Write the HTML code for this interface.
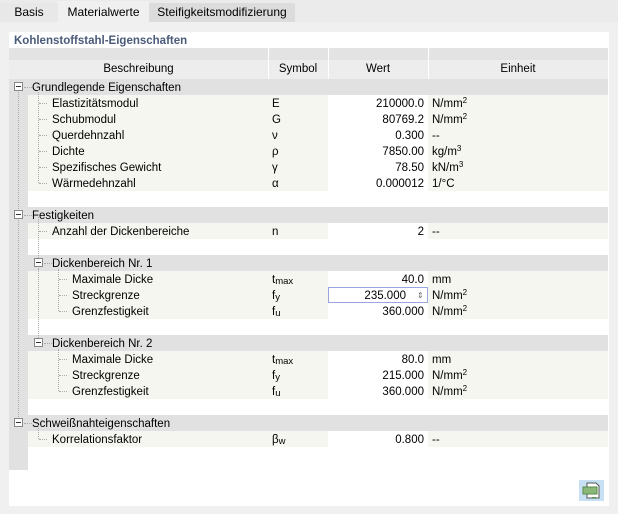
<!DOCTYPE html>
<html><head><meta charset="utf-8"><style>
*{margin:0;padding:0;box-sizing:border-box}
body{width:618px;height:514px;background:#ebebeb;font-family:"Liberation Sans",sans-serif;font-size:11.5px;color:#000;position:relative;overflow:hidden}
.a{position:absolute}
.tab{position:absolute;top:3px;height:19px;line-height:19px;text-align:center;font-size:12px}
.r{position:absolute;left:28px;width:580px;height:16px;line-height:18px}
.g{background:#e1e1e1}
.c{background:#f6f6f0}
.v{position:absolute;left:300px;width:100px;height:16px;background:#fff;text-align:right;padding-right:4px}
.s{position:absolute;left:244px}
.u{position:absolute;left:404px}
.t{position:absolute;white-space:nowrap}
.box{position:absolute;width:9px;height:9px;border:1px solid #888;background:#fff}
.box:after{content:"";position:absolute;left:1px;top:3px;width:5px;height:1px;background:#333}
.dh{position:absolute;height:0;border-top:1px dotted #aaa;width:8px}
.dv{position:absolute;width:0;border-left:1px dotted #aaa}
sup{font-size:8px;vertical-align:4px;line-height:0}
sub{font-size:9.5px;vertical-align:-1px;line-height:0}
</style></head><body>
<div class="tab" style="left:0;width:58px;background:#e8e8e8">Basis</div>
<div class="tab" style="left:58px;width:91px;top:1px;height:22px;line-height:23px;background:#f0f0f0">Materialwerte</div>
<div class="tab" style="left:149px;width:146px;background:#dcdcdc">Steifigkeitsmodifizierung</div>
<div class="a" style="left:0;top:22px;width:618px;height:492px;background:#f0f0f0"></div>
<div class="a" style="left:9px;top:32px;width:600px;height:474px;background:#fff"></div>
<div class="a" style="left:14px;top:33px;color:#4a5a7a;font-weight:bold;font-size:11.5px;line-height:16px">Kohlenstoffstahl-Eigenschaften</div>
<div class="a" style="left:9px;top:48px;width:599px;height:12px;background:#e3e3e3"></div>
<div class="a" style="left:9px;top:60px;width:599px;height:19px;background:#ededed;line-height:18px">
<span class="t" style="left:0;width:259px;text-align:center">Beschreibung</span>
<span class="t" style="left:259px;width:60px;text-align:center">Symbol</span>
<span class="t" style="left:319px;width:100px;text-align:center">Wert</span>
<span class="t" style="left:419px;width:180px;text-align:center">Einheit</span></div>
<div class="a" style="left:268px;top:48px;width:1px;height:31px;background:#fff"></div>
<div class="a" style="left:328px;top:48px;width:1px;height:31px;background:#fff"></div>
<div class="a" style="left:428px;top:48px;width:1px;height:31px;background:#fff"></div>
<div class="a" style="left:9px;top:79px;width:19px;height:391px;background:#e1e1e1"></div>

<!-- rows -->
<div class="r g" style="top:79px;left:9px;width:599px"><span class="t" style="left:23px">Grundlegende Eigenschaften</span></div>
<div class="r c" style="top:95px"><span class="t" style="left:24px">Elastizitätsmodul</span><span class="s">E</span><div class="v">210000.0</div><span class="u">N/mm<sup>2</sup></span></div>
<div class="r c" style="top:111px"><span class="t" style="left:24px">Schubmodul</span><span class="s">G</span><div class="v">80769.2</div><span class="u">N/mm<sup>2</sup></span></div>
<div class="r c" style="top:127px"><span class="t" style="left:24px">Querdehnzahl</span><span class="s">ν</span><div class="v">0.300</div><span class="u">--</span></div>
<div class="r c" style="top:143px"><span class="t" style="left:24px">Dichte</span><span class="s">ρ</span><div class="v">7850.00</div><span class="u">kg/m<sup>3</sup></span></div>
<div class="r c" style="top:159px"><span class="t" style="left:24px">Spezifisches Gewicht</span><span class="s">γ</span><div class="v">78.50</div><span class="u">kN/m<sup>3</sup></span></div>
<div class="r c" style="top:175px"><span class="t" style="left:24px">Wärmedehnzahl</span><span class="s">α</span><div class="v">0.000012</div><span class="u">1/°C</span></div>

<div class="r g" style="top:207px;left:9px;width:599px"><span class="t" style="left:23px">Festigkeiten</span></div>
<div class="r c" style="top:223px"><span class="t" style="left:24px">Anzahl der Dickenbereiche</span><span class="s">n</span><div class="v">2</div><span class="u">--</span></div>

<div class="r g" style="top:255px"><span class="t" style="left:24px">Dickenbereich Nr. 1</span></div>
<div class="r c" style="top:271px"><span class="t" style="left:44px">Maximale Dicke</span><span class="s">t<sub>max</sub></span><div class="v">40.0</div><span class="u">mm</span></div>
<div class="r c" style="top:287px"><span class="t" style="left:44px">Streckgrenze</span><span class="s">f<sub>y</sub></span><div class="v" style="border:1px solid #99a6e0;padding-right:21px;line-height:16px">235.000</div><span class="t" style="left:389px;font-size:8px;color:#666">⇕</span><span class="u">N/mm<sup>2</sup></span></div>
<div class="r c" style="top:303px"><span class="t" style="left:44px">Grenzfestigkeit</span><span class="s">f<sub>u</sub></span><div class="v">360.000</div><span class="u">N/mm<sup>2</sup></span></div>

<div class="r g" style="top:335px"><span class="t" style="left:24px">Dickenbereich Nr. 2</span></div>
<div class="r c" style="top:351px"><span class="t" style="left:44px">Maximale Dicke</span><span class="s">t<sub>max</sub></span><div class="v">80.0</div><span class="u">mm</span></div>
<div class="r c" style="top:367px"><span class="t" style="left:44px">Streckgrenze</span><span class="s">f<sub>y</sub></span><div class="v">215.000</div><span class="u">N/mm<sup>2</sup></span></div>
<div class="r c" style="top:383px"><span class="t" style="left:44px">Grenzfestigkeit</span><span class="s">f<sub>u</sub></span><div class="v">360.000</div><span class="u">N/mm<sup>2</sup></span></div>

<div class="r g" style="top:415px;left:9px;width:599px"><span class="t" style="left:23px">Schweißnahteigenschaften</span></div>
<div class="r c" style="top:431px"><span class="t" style="left:24px">Korrelationsfaktor</span><span class="s">β<sub>w</sub></span><div class="v">0.800</div><span class="u">--</span></div>

<!-- tree -->
<div class="box" style="left:14px;top:82px"></div>
<div class="box" style="left:14px;top:210px"></div>
<div class="box" style="left:14px;top:418px"></div>
<div class="box" style="left:34px;top:258px"></div>
<div class="box" style="left:34px;top:338px"></div>
<div class="dh" style="left:24px;top:87px"></div><div class="dh" style="left:24px;top:215px"></div><div class="dh" style="left:24px;top:423px"></div>
<div class="dv" style="left:18px;top:92px;height:117px"></div>
<div class="dv" style="left:18px;top:220px;height:197px"></div>
<div class="dv" style="left:38px;top:89px;height:94px"></div>
<div class="dh" style="left:39px;top:103px"></div><div class="dh" style="left:39px;top:119px"></div><div class="dh" style="left:39px;top:135px"></div><div class="dh" style="left:39px;top:151px"></div><div class="dh" style="left:39px;top:167px"></div><div class="dh" style="left:39px;top:183px"></div>
<div class="dv" style="left:38px;top:217px;height:41px"></div>
<div class="dh" style="left:39px;top:231px"></div>
<div class="dh" style="left:44px;top:263px"></div><div class="dh" style="left:44px;top:343px"></div>
<div class="dv" style="left:38px;top:268px;height:70px"></div>
<div class="dv" style="left:58px;top:269px;height:42px"></div>
<div class="dh" style="left:59px;top:279px"></div><div class="dh" style="left:59px;top:295px"></div><div class="dh" style="left:59px;top:311px"></div>
<div class="dv" style="left:58px;top:349px;height:42px"></div>
<div class="dh" style="left:59px;top:359px"></div><div class="dh" style="left:59px;top:375px"></div><div class="dh" style="left:59px;top:391px"></div>
<div class="dv" style="left:38px;top:425px;height:14px"></div>
<div class="dh" style="left:39px;top:439px"></div>

<!-- icon -->
<div class="a" style="left:579px;top:480px;width:25px;height:21px;background:#c8e0f4"></div>
<svg class="a" style="left:579px;top:480px" width="25" height="21">
<path d="M8 3h9l3 3v12H8z" fill="#fff" stroke="#555"/>
<rect x="4" y="7" width="14" height="7" fill="#8ab878" stroke="#5a8a4a"/>
<path d="M13 17h4l-2 2z" fill="#4a9a3a"/>
</svg>
</body></html>
